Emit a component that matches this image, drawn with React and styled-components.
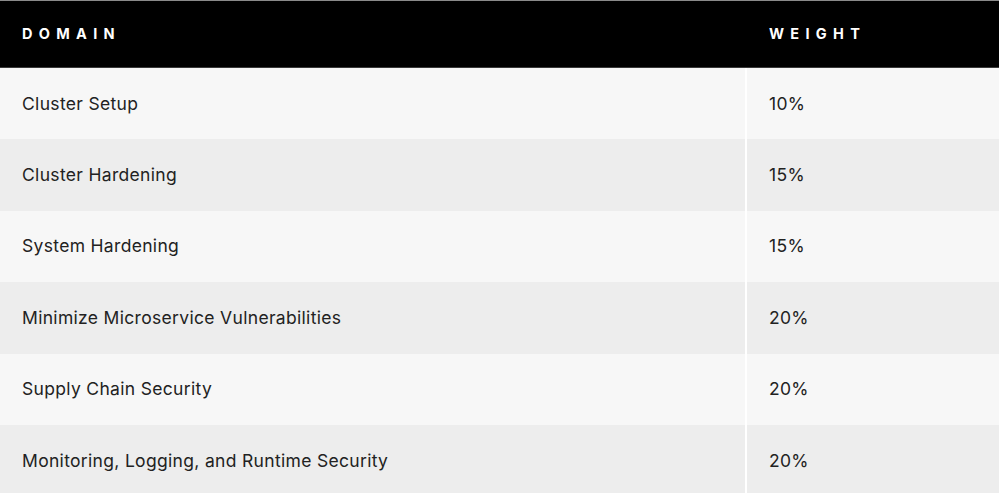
import React from 'react';
import styled, { createGlobalStyle } from 'styled-components';

const GlobalStyle = createGlobalStyle`
  html, body {
    margin: 0;
    padding: 0;
    background: #ffffff;
  }
  body {
    font-family: Inter, "Liberation Sans", sans-serif;
  }
`;

const Table = styled.div`
  width: 999px;
  height: 493px;
  overflow: hidden;
  display: grid;
  grid-template-columns: 747px 1fr;
  grid-template-rows: 67px repeat(6, 71.4px);
  border-top: 1px solid #8a8a8a;
  box-sizing: border-box;
  background: #ffffff;
`;

const HeadCell = styled.div`
  background: #000000;
  color: #ffffff;
  display: flex;
  align-items: center;
  padding: 0 0 2px 22px;
  font-size: 14.5px;
  font-weight: 700;
  letter-spacing: 6.3px;
  text-transform: uppercase;
  border-bottom: 1px solid #3a3a3a;
`;

const Cell = styled.div`
  box-sizing: border-box;
  background: ${p => (p.$alt ? '#ededed' : '#f7f7f7')};
  border-right: ${p => (p.$divider ? '2px solid #ffffff' : 'none')};
  color: #222222;
  display: flex;
  align-items: center;
  padding: 0 0 1px 22px;
  font-size: 17.5px;
  letter-spacing: 0.32px;
`;

const rows = [
  ['Cluster Setup', '10%'],
  ['Cluster Hardening', '15%'],
  ['System Hardening', '15%'],
  ['Minimize Microservice Vulnerabilities', '20%'],
  ['Supply Chain Security', '20%'],
  ['Monitoring, Logging, and Runtime Security', '20%'],
];

export default function App() {
  return (
    <>
      <GlobalStyle />
      <Table>
        <HeadCell>Domain</HeadCell>
        <HeadCell>Weight</HeadCell>
        {rows.map(([domain, weight], i) => (
          <React.Fragment key={domain}>
            <Cell $alt={i % 2 === 1} $divider>{domain}</Cell>
            <Cell $alt={i % 2 === 1}>{weight}</Cell>
          </React.Fragment>
        ))}
      </Table>
    </>
  );
}
